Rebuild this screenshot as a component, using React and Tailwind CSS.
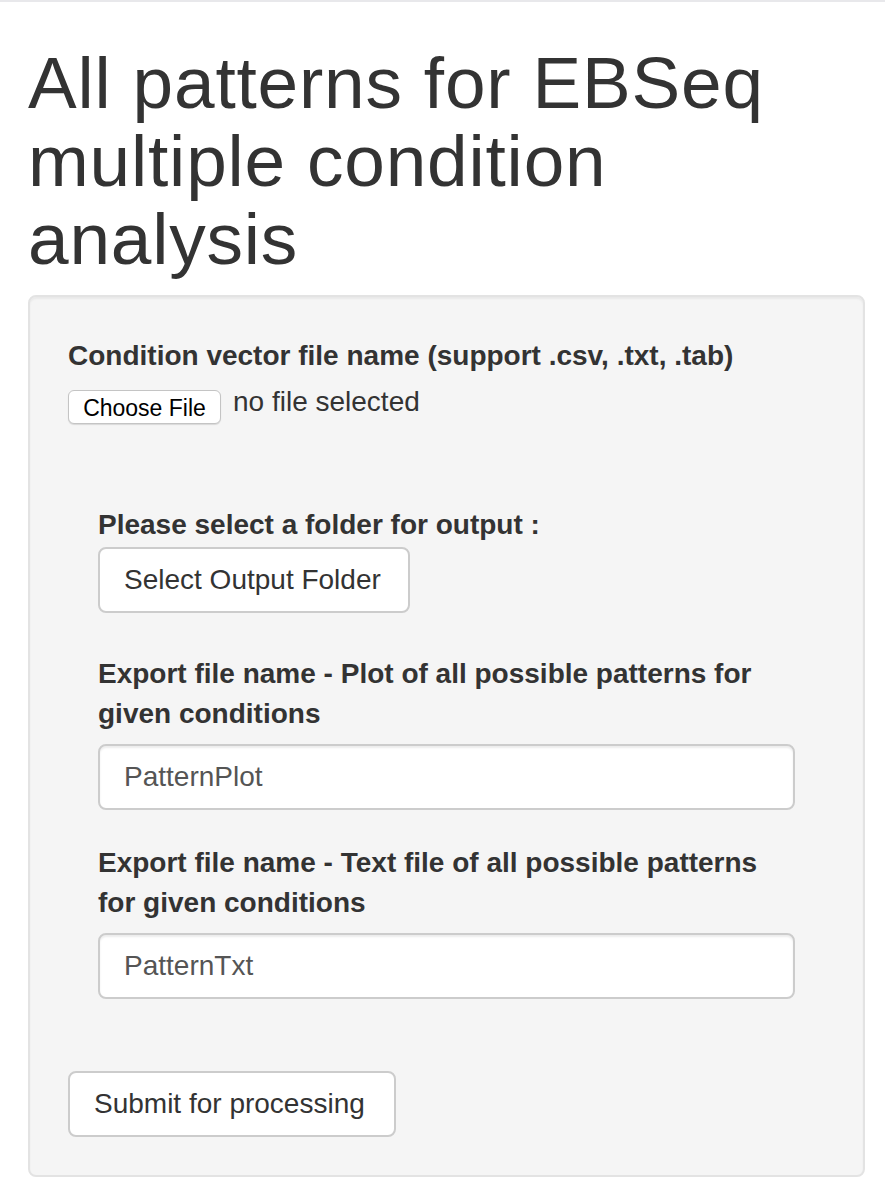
import React from "react";

const label = "block text-[28px] font-bold leading-[40px] text-[#333333]";
const textInput =
  "block h-[66px] w-full rounded-[8px] border-2 border-[#cccccc] bg-white px-[24px] text-[28px] text-[#555555] shadow-[inset_0_2px_2px_rgba(0,0,0,0.075)] outline-none";
const btn =
  "flex h-[66px] items-center rounded-[8px] border-2 border-[#cccccc] bg-white px-[24px] text-[28px] text-[#333333]";

const App = () => {
  return (
    <div className="h-[1197px] w-[885px] bg-white font-['Liberation_Sans',Arial,sans-serif] text-[#333333]">
      <div className="h-[2px] bg-[#e8e8eb]" />

      <div className="pl-[28px]">
        <h1 className="mt-[42px] mb-[17px] max-w-[800px] text-[73px] font-normal leading-[78px] tracking-[0.8px] text-[#333333]">
          All patterns for EBSeq multiple condition analysis
        </h1>

        <div className="w-[837px] rounded-[8px] border-2 border-[#e3e3e3] bg-[#f5f5f5] px-[38px] pt-[39px] pb-[38px] shadow-[inset_0_2px_2px_rgba(0,0,0,0.05)]">
          <label className={label}>Condition vector file name (support .csv, .txt, .tab)</label>
          <div className="mt-[14px] flex items-start">
            <button className="flex h-[34px] w-[153px] items-center justify-center rounded-[6px] border border-[#c4c4c4] bg-white pt-[2px] text-[23px] text-black shadow-[0_1px_1px_rgba(0,0,0,0.12)]">
              Choose File
            </button>
            <span className="ml-[12px] text-[28px] leading-[24px] text-[#333333]">no file selected</span>
          </div>

          <div className="mt-[81px] px-[30px]">
            <label className={label}>Please select a folder for output :</label>
            <button className={`${btn} mt-[2px] w-[312px]`}>Select Output Folder</button>

            <label className={`${label} mt-[41px]`}>
              Export file name - Plot of all possible patterns for given conditions
            </label>
            <input className={`${textInput} mt-[10px]`} defaultValue="PatternPlot" />

            <label className={`${label} mt-[33px]`}>
              Export file name - Text file of all possible patterns for given conditions
            </label>
            <input className={`${textInput} mt-[10px]`} defaultValue="PatternTxt" />
          </div>

          <button className={`${btn} mt-[72px] w-[328px]`}>Submit for processing</button>
        </div>
      </div>
    </div>
  );
};

export default App;
